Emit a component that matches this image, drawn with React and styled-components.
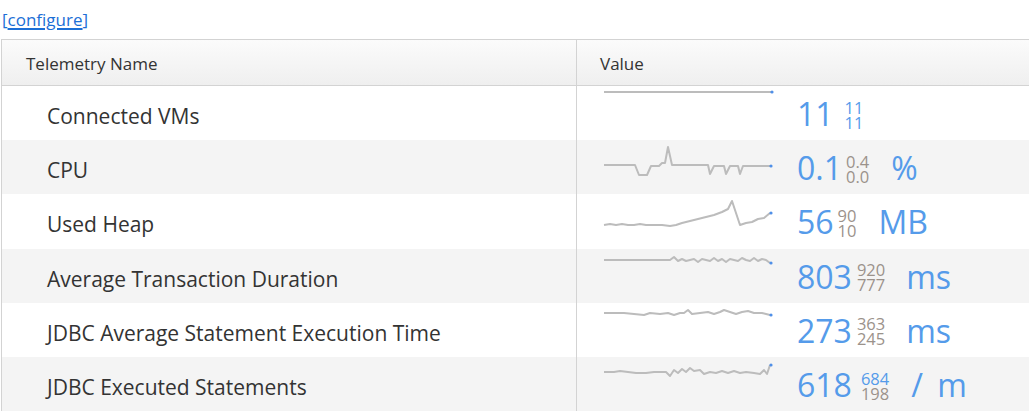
import React from "react";
import styled, { createGlobalStyle } from "styled-components";

const Global = createGlobalStyle`
  html, body { margin: 0; padding: 0; background: #fff; overflow: hidden; }
  body { font-family: "Open Sans", "Noto Sans", sans-serif; color: #333; }
`;

const Page = styled.div`
  width: 1029px;
  padding-left: 1px;
  box-sizing: border-box;
`;

const LinkBar = styled.div`
  height: 39px;
  box-sizing: border-box;
  padding: 8px 0 0 1px;
  font-size: 17px;
  line-height: 24px;
  color: #1c6fd6;
`;

const ConfigLink = styled.a`
  color: #1c6fd6;
  text-decoration: underline;
  text-decoration-thickness: 2px;
  text-underline-offset: 2px;
  cursor: pointer;
`;

const Table = styled.div`
  width: 1028px;
  border-left: 1px solid #d3d3d3;
  box-sizing: border-box;
`;

const HeaderRow = styled.div`
  display: grid;
  grid-template-columns: 575px 1fr;
  height: 47px;
  box-sizing: border-box;
  border-top: 1px solid #d3d3d3;
  border-bottom: 1px solid #d3d3d3;
  background: linear-gradient(#fbfbfb, #efefef);
`;

const HeaderCell = styled.div`
  display: flex;
  align-items: center;
  padding-left: ${(p) => p.$pad}px;
  font-size: 17px;
  color: #333;
  border-right: ${(p) => (p.$divider ? "1px solid #d3d3d3" : "none")};
  padding-top: 1px;
`;

const Row = styled.div`
  display: grid;
  grid-template-columns: 575px 1fr;
  height: 54.2px;
  background: ${(p) => (p.$alt ? "#f4f4f4" : "#fff")};
`;

const NameCell = styled.div`
  display: flex;
  align-items: center;
  padding: 6px 0 0 45px;
  box-sizing: border-box;
  font-size: 21px;
  color: #333;
  border-right: 1px solid #d3d3d3;
  white-space: nowrap;
`;

const ValueCell = styled.div`
  display: flex;
  align-items: center;
  padding-left: 27px;
`;

const Spark = styled.svg`
  align-self: flex-start;
  margin-top: 5px;
  flex: none;
  overflow: visible;
`;

const Readout = styled.div`
  display: flex;
  align-items: center;
  margin-left: 23px;
  color: #559bea;
  padding-top: 2px;
`;

const Big = styled.span`
  font-size: 32px;
  line-height: 40px;
`;

const Stack = styled.span`
  display: flex;
  flex-direction: column;
  align-items: ${(p) => (p.$right ? "flex-end" : "flex-start")};
  margin-left: ${(p) => p.$gap}px;
  font-size: 16.5px;
  line-height: 15px;
  margin-top: 1px;
`;

const Mini = styled.span`
  color: ${(p) => (p.$blue ? "#559bea" : "#9b928b")};
`;

const Unit = styled.span`
  font-size: 32px;
  line-height: 40px;
  margin-left: ${(p) => p.$gap}px;
  word-spacing: ${(p) => p.$spread || 0}px;
`;

function Sparkline({ pts }) {
  const last = pts[pts.length - 1];
  return (
    <Spark width="170" height="32" viewBox="0 0 170 32">
      <polyline
        points={pts.map((p) => p.join(",")).join(" ")}
        fill="none"
        stroke="#bcbcbc"
        strokeWidth="2"
        strokeLinejoin="round"
      />
      <circle cx={last[0] + 1} cy={last[1]} r="1.6" fill="#4f8fe8" />
    </Spark>
  );
}

const noisy = (base, segs, startFlat) => {
  const out = [[0, base], [startFlat, base]];
  let x = startFlat;
  segs.forEach((d) => {
    x += 4;
    out.push([Math.min(x, 167), base + d]);
  });
  return out;
};

const rows = [
  {
    name: "Connected VMs",
    pts: [[0, 1], [167, 1]],
    big: "11",
    hi: "11",
    lo: "11",
    hiBlue: true,
    loBlue: true,
    stackGap: 11,
    unit: "",
  },
  {
    name: "CPU",
    pts: [[0, 20], [31, 20], [35, 30], [43, 30], [47, 21], [55, 21], [58, 18], [61, 18], [64, 2], [68, 20], [104, 20], [106, 29], [110, 21], [120, 21], [122, 29], [126, 21], [134, 21], [136, 29], [139, 21], [166, 21]],
    big: "0.1",
    hi: "0.4",
    lo: "0.0",
    stackGap: 4,
    unit: "%",
    unitGap: 22,
  },
  {
    name: "Used Heap",
    pts: [[0, 26], [6, 25], [12, 26], [18, 25], [24, 26], [30, 26], [36, 25], [42, 26], [50, 26], [58, 26], [66, 27], [72, 26], [78, 24], [86, 22], [94, 20], [102, 18], [110, 16], [118, 13], [124, 10], [128, 2], [136, 26], [142, 24], [148, 23], [154, 20], [160, 19], [166, 14]],
    big: "56",
    hi: "90",
    lo: "10",
    stackGap: 4,
    unit: "MB",
    unitGap: 22,
  },
  {
    name: "Average Transaction Duration",
    pts: noisy(6, [-3, 1, -1, 1, 0, -1, 2, -1, 0, 1, -2, 1, -1, 2, -1, 0, 1, -2, 0, 1, -2, 1, -1, 0, 3], 66),
    big: "803",
    hi: "920",
    lo: "777",
    stackGap: 5,
    unit: "ms",
    unitGap: 21,
  },
  {
    name: "JDBC Average Statement Execution Time",
    pts: [[0, 5], [20, 5], [30, 6], [40, 7], [46, 5], [56, 6], [64, 5], [70, 7], [76, 5], [80, 5], [84, 2], [88, 6], [96, 5], [104, 4], [110, 6], [116, 4], [120, 2], [126, 4], [132, 6], [138, 4], [144, 3], [150, 5], [158, 5], [166, 7]],
    big: "273",
    hi: "363",
    lo: "245",
    stackGap: 5,
    unit: "ms",
    unitGap: 21,
  },
  {
    name: "JDBC Executed Statements",
    pts: [[0, 10], [10, 10], [16, 9], [24, 10], [32, 11], [42, 11], [50, 10], [62, 10], [66, 14], [70, 8], [74, 11], [78, 7], [82, 10], [86, 6], [90, 9], [96, 8], [100, 12], [106, 10], [112, 11], [118, 9], [124, 11], [130, 9], [136, 11], [142, 10], [150, 11], [156, 12], [160, 8], [163, 12], [166, 3]],
    big: "618",
    hi: "684",
    lo: "198",
    hiBlue: true,
    stackGap: 9,
    right: true,
    unit: "/ m",
    unitGap: 22,
    spread: 6,
  },
];

export default function App() {
  return (
    <Page>
      <Global />
      <LinkBar>
        [<ConfigLink>configure</ConfigLink>]
      </LinkBar>
      <Table>
        <HeaderRow>
          <HeaderCell $pad={24} $divider>Telemetry Name</HeaderCell>
          <HeaderCell $pad={23}>Value</HeaderCell>
        </HeaderRow>
        {rows.map((r, i) => (
          <Row key={r.name} $alt={i % 2 === 1}>
            <NameCell>{r.name}</NameCell>
            <ValueCell>
              <Sparkline pts={r.pts} />
              <Readout>
                <Big>{r.big}</Big>
                <Stack $gap={r.stackGap} $right={r.right}>
                  <Mini $blue={r.hiBlue}>{r.hi}</Mini>
                  <Mini $blue={r.loBlue}>{r.lo}</Mini>
                </Stack>
                {r.unit && (
                  <Unit $gap={r.unitGap} $spread={r.spread}>
                    {r.unit}
                  </Unit>
                )}
              </Readout>
            </ValueCell>
          </Row>
        ))}
      </Table>
    </Page>
  );
}
